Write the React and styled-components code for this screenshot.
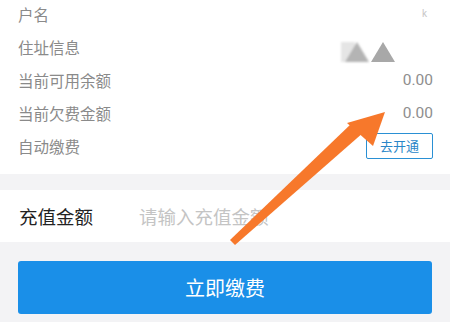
import React from 'react';
import styled, { createGlobalStyle } from 'styled-components';

const Global = createGlobalStyle`
  html, body { margin: 0; padding: 0; background: #f3f3f5; }
  body { font-family: "Noto Sans CJK SC", "Noto Sans", sans-serif; width: 450px; height: 322px; overflow: hidden; }
`;

const Page = styled.div`
  position: relative;
  width: 450px;
  height: 322px;
  overflow: hidden;
`;

const InfoPanel = styled.div`
  background: #fff;
  margin-top: -3px;
  padding: 0 17px 12px 18px;
`;

const Row = styled.div`
  display: flex;
  align-items: center;
  justify-content: space-between;
  height: 33.1px;
`;

const Label = styled.span`
  font-size: 15.5px;
  color: #8a8a8a;
`;

const Value = styled.span`
  font-family: "Roboto", "Noto Sans", sans-serif;
  font-size: 15.5px;
  color: #8e8e8e;
`;

const OpenButton = styled.button`
  width: 67px;
  height: 26px;
  border: 1px solid #2a90d4;
  border-radius: 2px;
  background: #fff;
  color: #2a86c8;
  font-family: inherit;
  font-size: 13px;
  padding: 0;
`;

const InputRow = styled.div`
  margin-top: 16px;
  background: #fff;
  height: 52px;
  display: flex;
  align-items: center;
  padding-left: 19px;
`;

const InputLabel = styled.span`
  width: 120px;
  font-size: 18.5px;
  color: #222;
`;

const Placeholder = styled.span`
  font-size: 18.5px;
  color: #c4c4c4;
`;

const PayButton = styled.button`
  display: block;
  margin: 19px 0 0 18px;
  width: 414px;
  height: 53px;
  border: none;
  border-radius: 3px;
  background: #1a8fe8;
  color: #fff;
  font-family: inherit;
  font-size: 20px;
`;

const Overlay = styled.svg`
  position: absolute;
  left: 0;
  top: 0;
  pointer-events: none;
`;

const Blurred = () => (
  <Overlay width="450" height="322">
    <defs>
      <filter id="b1"><feGaussianBlur stdDeviation="1.2" /></filter>
      <filter id="b2"><feGaussianBlur stdDeviation="0.6" /></filter>
    </defs>
    <g filter="url(#b1)">
      <rect x="341" y="42" width="14" height="20" fill="#dadada" opacity="0.7" />
      <polygon points="345,62 357,42 369,62" fill="#b4b4b4" />
    </g>
    <g filter="url(#b2)">
      <polygon points="371,62 383,42 395,62" fill="#a8a8a8" />
    </g>
    <text x="422" y="17" fontSize="10" fill="#c8c8c8" fontFamily="Roboto, sans-serif">k</text>
  </Overlay>
);

const Arrow = () => (
  <Overlay width="450" height="322">
    <polygon points="230,240 235,245 364,132 352,123" fill="#f7782b" />
    <polygon points="385,112 347,123 373,146" fill="#f7782b" />
  </Overlay>
);

export default function App() {
  return (
    <Page>
      <Global />
      <InfoPanel>
        <Row><Label>户名</Label></Row>
        <Row><Label>住址信息</Label></Row>
        <Row><Label>当前可用余额</Label><Value>0.00</Value></Row>
        <Row><Label>当前欠费金额</Label><Value>0.00</Value></Row>
        <Row><Label>自动缴费</Label><OpenButton>去开通</OpenButton></Row>
      </InfoPanel>
      <InputRow>
        <InputLabel>充值金额</InputLabel>
        <Placeholder>请输入充值金额</Placeholder>
      </InputRow>
      <PayButton>立即缴费</PayButton>
      <Blurred />
      <Arrow />
    </Page>
  );
}
